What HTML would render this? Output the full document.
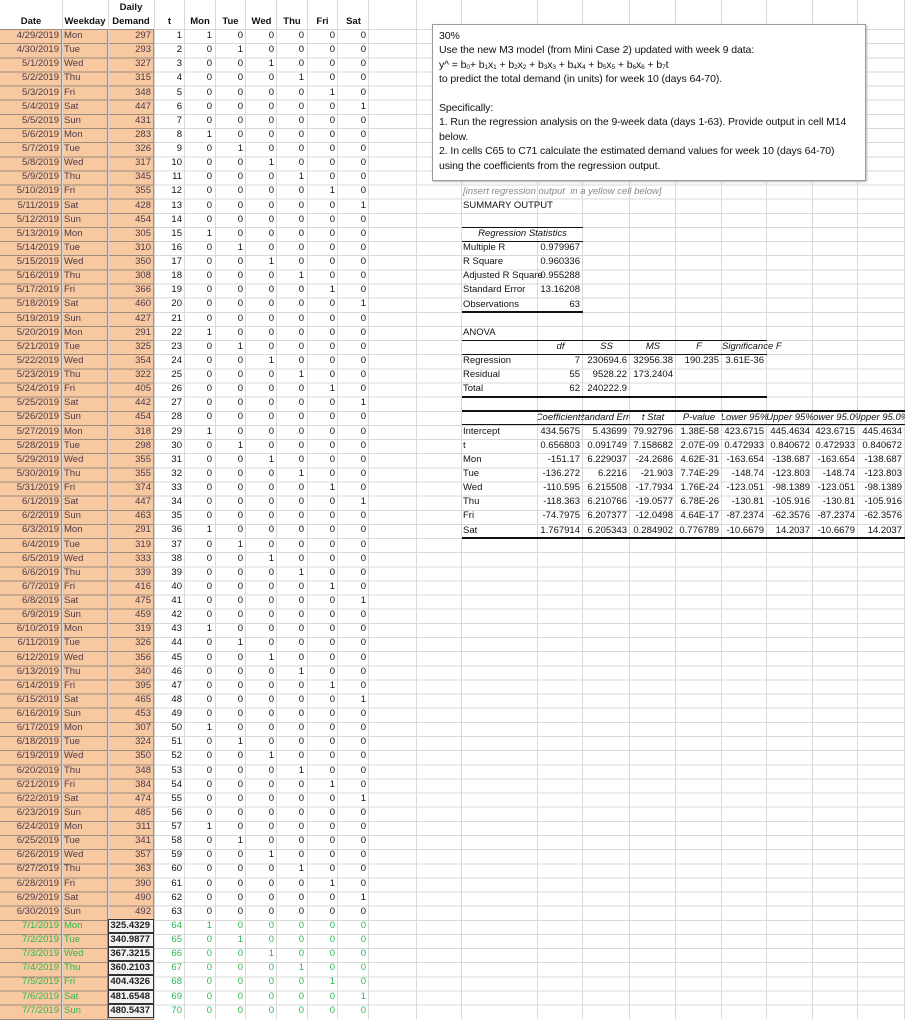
<!DOCTYPE html>
<html><head><meta charset="utf-8">
<style>
*{margin:0;padding:0;box-sizing:border-box}
body{width:905px;height:1024px;position:relative;background:#fff;overflow:hidden;font-family:"Liberation Sans",sans-serif;font-size:9.5px;color:#111}
.hl{position:absolute;left:0;top:29px;width:905px;height:990px;border-top:1px solid #d9d9d9;background:repeating-linear-gradient(to bottom,transparent 0,transparent 13.14px,#d9d9d9 13.14px,#d9d9d9 14.14px)}
.vl{position:absolute;top:0;width:1px;height:1019px;background:#d9d9d9}
.peach{position:absolute;left:0;top:29px;width:154px;height:990px;background:#f8c8a0;border-top:1px solid #9a8a7c}
.peach .h{position:absolute;left:0;top:0;width:154px;height:990px;background:repeating-linear-gradient(to bottom,transparent 0,transparent 13.14px,#9a8c80 13.14px,#9a8c80 14.14px)}
.pv{position:absolute;top:29px;width:1px;height:990px;background:#9a8c80}
.L{position:absolute;left:0;top:29px;display:grid;grid-template-columns:62px 46px 46px 31px 30px 31px 31px 30px 31px 31px;grid-auto-rows:14.14px}
.L i,.R i{font-style:normal;text-align:right;padding-right:3px;line-height:14.14px;white-space:nowrap;overflow:hidden}
.r{display:contents}
.r i:nth-child(1),.r i:nth-child(2),.r i:nth-child(3){color:#4a3a4a}
.r i:nth-child(2){text-align:left;padding-left:2px}
.g i{color:#2db84d!important}
.g i:nth-child(3){color:#222!important;font-weight:bold;background:#f2f2f2;border:1px solid #333;line-height:12px}
.hd{position:absolute;font-weight:bold;text-align:center;white-space:nowrap}
.R{position:absolute;left:462px;top:184.54px;display:grid;grid-template-columns:76px 45px 47px 46px 46px 45px 46px 45px 47px;grid-auto-rows:14.14px}
.R i.l{text-align:left;padding-left:1px;overflow:visible}
.R i.w{grid-column:1/span 9;text-align:left;padding-left:1px;overflow:visible}
.R i.c{display:flex;justify-content:center;font-style:italic;padding:0;overflow:hidden}
.R i.sf{font-style:italic;overflow:visible;padding-right:0;margin-right:-4px}
.ln{position:absolute;height:1px;background:#111}
.box{position:absolute;left:432px;top:24px;width:434px;height:157px;border:1px solid #9a9a9a;background:#fff;box-shadow:1px 1px 2px #bbb;padding:4px 0 0 6px;font-size:10.5px;line-height:14.4px;white-space:nowrap;color:#111;letter-spacing:-0.1px}
sub{font-size:6.5px;vertical-align:-1px;line-height:0}
</style></head><body>
<div class="hl"></div>
<div class="peach"><div class="h"></div></div>
<div class="vl" style="left:62px"></div><div class="vl" style="left:108px"></div><div class="vl" style="left:154px"></div>
<div class="vl" style="left:184px"></div><div class="vl" style="left:215px"></div><div class="vl" style="left:245px"></div><div class="vl" style="left:276px"></div><div class="vl" style="left:307px"></div><div class="vl" style="left:337px"></div><div class="vl" style="left:368px"></div><div class="vl" style="left:416px"></div><div class="vl" style="left:461px"></div><div class="vl" style="left:537px"></div><div class="vl" style="left:582px"></div><div class="vl" style="left:629px"></div><div class="vl" style="left:675px"></div><div class="vl" style="left:721px"></div><div class="vl" style="left:766px"></div><div class="vl" style="left:812px"></div><div class="vl" style="left:857px"></div><div class="vl" style="left:904px"></div>
<div class="pv" style="left:61px"></div><div class="pv" style="left:107px"></div><div class="pv" style="left:153px"></div>

<div class="hd" style="left:0;width:62px;top:16px">Date</div>
<div class="hd" style="left:62px;width:46px;top:16px">Weekday</div>
<div class="hd" style="left:108px;width:46px;top:2px">Daily</div>
<div class="hd" style="left:108px;width:46px;top:16px">Demand</div>
<div class="hd" style="left:154px;width:31px;top:16px">t</div>
<div class="hd" style="left:185px;width:30px;top:16px">Mon</div>
<div class="hd" style="left:215px;width:31px;top:16px">Tue</div>
<div class="hd" style="left:246px;width:31px;top:16px">Wed</div>
<div class="hd" style="left:277px;width:30px;top:16px">Thu</div>
<div class="hd" style="left:307px;width:31px;top:16px">Fri</div>
<div class="hd" style="left:338px;width:31px;top:16px">Sat</div>

<div class="L">
<div class="r"><i>4/29/2019</i><i>Mon</i><i>297</i><i>1</i><i>1</i><i>0</i><i>0</i><i>0</i><i>0</i><i>0</i></div>
<div class="r"><i>4/30/2019</i><i>Tue</i><i>293</i><i>2</i><i>0</i><i>1</i><i>0</i><i>0</i><i>0</i><i>0</i></div>
<div class="r"><i>5/1/2019</i><i>Wed</i><i>327</i><i>3</i><i>0</i><i>0</i><i>1</i><i>0</i><i>0</i><i>0</i></div>
<div class="r"><i>5/2/2019</i><i>Thu</i><i>315</i><i>4</i><i>0</i><i>0</i><i>0</i><i>1</i><i>0</i><i>0</i></div>
<div class="r"><i>5/3/2019</i><i>Fri</i><i>348</i><i>5</i><i>0</i><i>0</i><i>0</i><i>0</i><i>1</i><i>0</i></div>
<div class="r"><i>5/4/2019</i><i>Sat</i><i>447</i><i>6</i><i>0</i><i>0</i><i>0</i><i>0</i><i>0</i><i>1</i></div>
<div class="r"><i>5/5/2019</i><i>Sun</i><i>431</i><i>7</i><i>0</i><i>0</i><i>0</i><i>0</i><i>0</i><i>0</i></div>
<div class="r"><i>5/6/2019</i><i>Mon</i><i>283</i><i>8</i><i>1</i><i>0</i><i>0</i><i>0</i><i>0</i><i>0</i></div>
<div class="r"><i>5/7/2019</i><i>Tue</i><i>326</i><i>9</i><i>0</i><i>1</i><i>0</i><i>0</i><i>0</i><i>0</i></div>
<div class="r"><i>5/8/2019</i><i>Wed</i><i>317</i><i>10</i><i>0</i><i>0</i><i>1</i><i>0</i><i>0</i><i>0</i></div>
<div class="r"><i>5/9/2019</i><i>Thu</i><i>345</i><i>11</i><i>0</i><i>0</i><i>0</i><i>1</i><i>0</i><i>0</i></div>
<div class="r"><i>5/10/2019</i><i>Fri</i><i>355</i><i>12</i><i>0</i><i>0</i><i>0</i><i>0</i><i>1</i><i>0</i></div>
<div class="r"><i>5/11/2019</i><i>Sat</i><i>428</i><i>13</i><i>0</i><i>0</i><i>0</i><i>0</i><i>0</i><i>1</i></div>
<div class="r"><i>5/12/2019</i><i>Sun</i><i>454</i><i>14</i><i>0</i><i>0</i><i>0</i><i>0</i><i>0</i><i>0</i></div>
<div class="r"><i>5/13/2019</i><i>Mon</i><i>305</i><i>15</i><i>1</i><i>0</i><i>0</i><i>0</i><i>0</i><i>0</i></div>
<div class="r"><i>5/14/2019</i><i>Tue</i><i>310</i><i>16</i><i>0</i><i>1</i><i>0</i><i>0</i><i>0</i><i>0</i></div>
<div class="r"><i>5/15/2019</i><i>Wed</i><i>350</i><i>17</i><i>0</i><i>0</i><i>1</i><i>0</i><i>0</i><i>0</i></div>
<div class="r"><i>5/16/2019</i><i>Thu</i><i>308</i><i>18</i><i>0</i><i>0</i><i>0</i><i>1</i><i>0</i><i>0</i></div>
<div class="r"><i>5/17/2019</i><i>Fri</i><i>366</i><i>19</i><i>0</i><i>0</i><i>0</i><i>0</i><i>1</i><i>0</i></div>
<div class="r"><i>5/18/2019</i><i>Sat</i><i>460</i><i>20</i><i>0</i><i>0</i><i>0</i><i>0</i><i>0</i><i>1</i></div>
<div class="r"><i>5/19/2019</i><i>Sun</i><i>427</i><i>21</i><i>0</i><i>0</i><i>0</i><i>0</i><i>0</i><i>0</i></div>
<div class="r"><i>5/20/2019</i><i>Mon</i><i>291</i><i>22</i><i>1</i><i>0</i><i>0</i><i>0</i><i>0</i><i>0</i></div>
<div class="r"><i>5/21/2019</i><i>Tue</i><i>325</i><i>23</i><i>0</i><i>1</i><i>0</i><i>0</i><i>0</i><i>0</i></div>
<div class="r"><i>5/22/2019</i><i>Wed</i><i>354</i><i>24</i><i>0</i><i>0</i><i>1</i><i>0</i><i>0</i><i>0</i></div>
<div class="r"><i>5/23/2019</i><i>Thu</i><i>322</i><i>25</i><i>0</i><i>0</i><i>0</i><i>1</i><i>0</i><i>0</i></div>
<div class="r"><i>5/24/2019</i><i>Fri</i><i>405</i><i>26</i><i>0</i><i>0</i><i>0</i><i>0</i><i>1</i><i>0</i></div>
<div class="r"><i>5/25/2019</i><i>Sat</i><i>442</i><i>27</i><i>0</i><i>0</i><i>0</i><i>0</i><i>0</i><i>1</i></div>
<div class="r"><i>5/26/2019</i><i>Sun</i><i>454</i><i>28</i><i>0</i><i>0</i><i>0</i><i>0</i><i>0</i><i>0</i></div>
<div class="r"><i>5/27/2019</i><i>Mon</i><i>318</i><i>29</i><i>1</i><i>0</i><i>0</i><i>0</i><i>0</i><i>0</i></div>
<div class="r"><i>5/28/2019</i><i>Tue</i><i>298</i><i>30</i><i>0</i><i>1</i><i>0</i><i>0</i><i>0</i><i>0</i></div>
<div class="r"><i>5/29/2019</i><i>Wed</i><i>355</i><i>31</i><i>0</i><i>0</i><i>1</i><i>0</i><i>0</i><i>0</i></div>
<div class="r"><i>5/30/2019</i><i>Thu</i><i>355</i><i>32</i><i>0</i><i>0</i><i>0</i><i>1</i><i>0</i><i>0</i></div>
<div class="r"><i>5/31/2019</i><i>Fri</i><i>374</i><i>33</i><i>0</i><i>0</i><i>0</i><i>0</i><i>1</i><i>0</i></div>
<div class="r"><i>6/1/2019</i><i>Sat</i><i>447</i><i>34</i><i>0</i><i>0</i><i>0</i><i>0</i><i>0</i><i>1</i></div>
<div class="r"><i>6/2/2019</i><i>Sun</i><i>463</i><i>35</i><i>0</i><i>0</i><i>0</i><i>0</i><i>0</i><i>0</i></div>
<div class="r"><i>6/3/2019</i><i>Mon</i><i>291</i><i>36</i><i>1</i><i>0</i><i>0</i><i>0</i><i>0</i><i>0</i></div>
<div class="r"><i>6/4/2019</i><i>Tue</i><i>319</i><i>37</i><i>0</i><i>1</i><i>0</i><i>0</i><i>0</i><i>0</i></div>
<div class="r"><i>6/5/2019</i><i>Wed</i><i>333</i><i>38</i><i>0</i><i>0</i><i>1</i><i>0</i><i>0</i><i>0</i></div>
<div class="r"><i>6/6/2019</i><i>Thu</i><i>339</i><i>39</i><i>0</i><i>0</i><i>0</i><i>1</i><i>0</i><i>0</i></div>
<div class="r"><i>6/7/2019</i><i>Fri</i><i>416</i><i>40</i><i>0</i><i>0</i><i>0</i><i>0</i><i>1</i><i>0</i></div>
<div class="r"><i>6/8/2019</i><i>Sat</i><i>475</i><i>41</i><i>0</i><i>0</i><i>0</i><i>0</i><i>0</i><i>1</i></div>
<div class="r"><i>6/9/2019</i><i>Sun</i><i>459</i><i>42</i><i>0</i><i>0</i><i>0</i><i>0</i><i>0</i><i>0</i></div>
<div class="r"><i>6/10/2019</i><i>Mon</i><i>319</i><i>43</i><i>1</i><i>0</i><i>0</i><i>0</i><i>0</i><i>0</i></div>
<div class="r"><i>6/11/2019</i><i>Tue</i><i>326</i><i>44</i><i>0</i><i>1</i><i>0</i><i>0</i><i>0</i><i>0</i></div>
<div class="r"><i>6/12/2019</i><i>Wed</i><i>356</i><i>45</i><i>0</i><i>0</i><i>1</i><i>0</i><i>0</i><i>0</i></div>
<div class="r"><i>6/13/2019</i><i>Thu</i><i>340</i><i>46</i><i>0</i><i>0</i><i>0</i><i>1</i><i>0</i><i>0</i></div>
<div class="r"><i>6/14/2019</i><i>Fri</i><i>395</i><i>47</i><i>0</i><i>0</i><i>0</i><i>0</i><i>1</i><i>0</i></div>
<div class="r"><i>6/15/2019</i><i>Sat</i><i>465</i><i>48</i><i>0</i><i>0</i><i>0</i><i>0</i><i>0</i><i>1</i></div>
<div class="r"><i>6/16/2019</i><i>Sun</i><i>453</i><i>49</i><i>0</i><i>0</i><i>0</i><i>0</i><i>0</i><i>0</i></div>
<div class="r"><i>6/17/2019</i><i>Mon</i><i>307</i><i>50</i><i>1</i><i>0</i><i>0</i><i>0</i><i>0</i><i>0</i></div>
<div class="r"><i>6/18/2019</i><i>Tue</i><i>324</i><i>51</i><i>0</i><i>1</i><i>0</i><i>0</i><i>0</i><i>0</i></div>
<div class="r"><i>6/19/2019</i><i>Wed</i><i>350</i><i>52</i><i>0</i><i>0</i><i>1</i><i>0</i><i>0</i><i>0</i></div>
<div class="r"><i>6/20/2019</i><i>Thu</i><i>348</i><i>53</i><i>0</i><i>0</i><i>0</i><i>1</i><i>0</i><i>0</i></div>
<div class="r"><i>6/21/2019</i><i>Fri</i><i>384</i><i>54</i><i>0</i><i>0</i><i>0</i><i>0</i><i>1</i><i>0</i></div>
<div class="r"><i>6/22/2019</i><i>Sat</i><i>474</i><i>55</i><i>0</i><i>0</i><i>0</i><i>0</i><i>0</i><i>1</i></div>
<div class="r"><i>6/23/2019</i><i>Sun</i><i>485</i><i>56</i><i>0</i><i>0</i><i>0</i><i>0</i><i>0</i><i>0</i></div>
<div class="r"><i>6/24/2019</i><i>Mon</i><i>311</i><i>57</i><i>1</i><i>0</i><i>0</i><i>0</i><i>0</i><i>0</i></div>
<div class="r"><i>6/25/2019</i><i>Tue</i><i>341</i><i>58</i><i>0</i><i>1</i><i>0</i><i>0</i><i>0</i><i>0</i></div>
<div class="r"><i>6/26/2019</i><i>Wed</i><i>357</i><i>59</i><i>0</i><i>0</i><i>1</i><i>0</i><i>0</i><i>0</i></div>
<div class="r"><i>6/27/2019</i><i>Thu</i><i>363</i><i>60</i><i>0</i><i>0</i><i>0</i><i>1</i><i>0</i><i>0</i></div>
<div class="r"><i>6/28/2019</i><i>Fri</i><i>390</i><i>61</i><i>0</i><i>0</i><i>0</i><i>0</i><i>1</i><i>0</i></div>
<div class="r"><i>6/29/2019</i><i>Sat</i><i>490</i><i>62</i><i>0</i><i>0</i><i>0</i><i>0</i><i>0</i><i>1</i></div>
<div class="r"><i>6/30/2019</i><i>Sun</i><i>492</i><i>63</i><i>0</i><i>0</i><i>0</i><i>0</i><i>0</i><i>0</i></div>
<div class="r g"><i>7/1/2019</i><i>Mon</i><i>325.4329</i><i>64</i><i>1</i><i>0</i><i>0</i><i>0</i><i>0</i><i>0</i></div>
<div class="r g"><i>7/2/2019</i><i>Tue</i><i>340.9877</i><i>65</i><i>0</i><i>1</i><i>0</i><i>0</i><i>0</i><i>0</i></div>
<div class="r g"><i>7/3/2019</i><i>Wed</i><i>367.3215</i><i>66</i><i>0</i><i>0</i><i>1</i><i>0</i><i>0</i><i>0</i></div>
<div class="r g"><i>7/4/2019</i><i>Thu</i><i>360.2103</i><i>67</i><i>0</i><i>0</i><i>0</i><i>1</i><i>0</i><i>0</i></div>
<div class="r g"><i>7/5/2019</i><i>Fri</i><i>404.4326</i><i>68</i><i>0</i><i>0</i><i>0</i><i>0</i><i>1</i><i>0</i></div>
<div class="r g"><i>7/6/2019</i><i>Sat</i><i>481.6548</i><i>69</i><i>0</i><i>0</i><i>0</i><i>0</i><i>0</i><i>1</i></div>
<div class="r g"><i>7/7/2019</i><i>Sun</i><i>480.5437</i><i>70</i><i>0</i><i>0</i><i>0</i><i>0</i><i>0</i><i>0</i></div>
</div>

<div class="R">
<i class="w" style="color:#888;font-style:italic">[insert regression output&nbsp; in a yellow cell below]</i>
<i class="w">SUMMARY OUTPUT</i>
<i class="w"></i>
<i class="c" style="grid-column:1/span 2">Regression Statistics</i><i></i><i></i><i></i><i></i><i></i><i></i><i></i>
<i class="l">Multiple R</i><i>0.979967</i><i></i><i></i><i></i><i></i><i></i><i></i><i></i>
<i class="l">R Square</i><i>0.960336</i><i></i><i></i><i></i><i></i><i></i><i></i><i></i>
<i class="l">Adjusted R Square</i><i>0.955288</i><i></i><i></i><i></i><i></i><i></i><i></i><i></i>
<i class="l">Standard Error</i><i>13.16208</i><i></i><i></i><i></i><i></i><i></i><i></i><i></i>
<i class="l">Observations</i><i>63</i><i></i><i></i><i></i><i></i><i></i><i></i><i></i>
<i class="w"></i>
<i class="w">ANOVA</i>
<i></i><i class="c">df</i><i class="c">SS</i><i class="c">MS</i><i class="c">F</i><i class="sf">Significance F</i><i></i><i></i><i></i>
<i class="l">Regression</i><i>7</i><i>230694.6</i><i>32956.38</i><i>190.235</i><i>3.61E-36</i><i></i><i></i><i></i>
<i class="l">Residual</i><i>55</i><i>9528.22</i><i>173.2404</i><i></i><i></i><i></i><i></i><i></i>
<i class="l">Total</i><i>62</i><i>240222.9</i><i></i><i></i><i></i><i></i><i></i><i></i>
<i class="w"></i>
<i></i><i class="c">Coefficients</i><i class="c">Standard Error</i><i class="c">t Stat</i><i class="c">P-value</i><i class="c">Lower 95%</i><i class="c">Upper 95%</i><i class="c">Lower 95.0%</i><i class="c">Upper 95.0%</i>
<i class="l">Intercept</i><i>434.5675</i><i>5.43699</i><i>79.92796</i><i>1.38E-58</i><i>423.6715</i><i>445.4634</i><i>423.6715</i><i>445.4634</i>
<i class="l">t</i><i>0.656803</i><i>0.091749</i><i>7.158682</i><i>2.07E-09</i><i>0.472933</i><i>0.840672</i><i>0.472933</i><i>0.840672</i>
<i class="l">Mon</i><i>-151.17</i><i>6.229037</i><i>-24.2686</i><i>4.62E-31</i><i>-163.654</i><i>-138.687</i><i>-163.654</i><i>-138.687</i>
<i class="l">Tue</i><i>-136.272</i><i>6.2216</i><i>-21.903</i><i>7.74E-29</i><i>-148.74</i><i>-123.803</i><i>-148.74</i><i>-123.803</i>
<i class="l">Wed</i><i>-110.595</i><i>6.215508</i><i>-17.7934</i><i>1.76E-24</i><i>-123.051</i><i>-98.1389</i><i>-123.051</i><i>-98.1389</i>
<i class="l">Thu</i><i>-118.363</i><i>6.210766</i><i>-19.0577</i><i>6.78E-26</i><i>-130.81</i><i>-105.916</i><i>-130.81</i><i>-105.916</i>
<i class="l">Fri</i><i>-74.7975</i><i>6.207377</i><i>-12.0498</i><i>4.64E-17</i><i>-87.2374</i><i>-62.3576</i><i>-87.2374</i><i>-62.3576</i>
<i class="l">Sat</i><i>1.767914</i><i>6.205343</i><i>0.284902</i><i>0.776789</i><i>-10.6679</i><i>14.2037</i><i>-10.6679</i><i>14.2037</i>
</div>

<div class="ln" style="left:462px;width:121px;top:226.5px"></div>
<div class="ln" style="left:462px;width:121px;top:240.6px"></div>
<div class="ln" style="left:462px;width:121px;top:311px;height:2px"></div>
<div class="ln" style="left:462px;width:305px;top:339.6px"></div>
<div class="ln" style="left:462px;width:305px;top:353.7px"></div>
<div class="ln" style="left:462px;width:305px;top:396px;height:2px"></div>
<div class="ln" style="left:462px;width:443px;top:410px;height:2px"></div>
<div class="ln" style="left:462px;width:443px;top:424.4px"></div>
<div class="ln" style="left:462px;width:443px;top:537.3px;height:2px"></div>

<div class="box">30%<br>
Use the new M3 model (from Mini Case 2) updated with week 9 data:<br>
y^ = b<sub>0</sub>+ b<sub>1</sub>x<sub>1</sub> + b<sub>2</sub>x<sub>2</sub> + b<sub>3</sub>x<sub>3</sub> + b<sub>4</sub>x<sub>4</sub> + b<sub>5</sub>x<sub>5</sub> + b<sub>6</sub>x<sub>6</sub> + b<sub>7</sub>t<br>
to predict the total demand (in units) for week 10 (days 64-70).<br>
<br>
Specifically:<br>
1. Run the regression analysis on the 9-week data (days 1-63). Provide output in cell M14<br>
below.<br>
2. In cells C65 to C71 calculate the estimated demand values for week 10 (days 64-70)<br>
using the coefficients from the regression output.</div>
</body></html>
